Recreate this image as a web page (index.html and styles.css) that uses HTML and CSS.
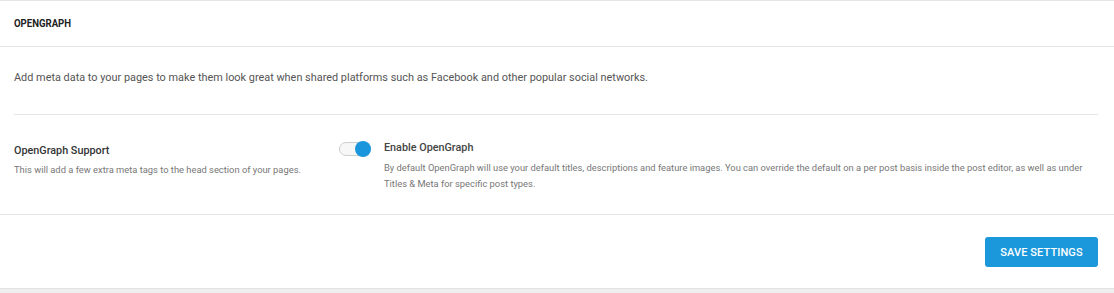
FILE: index.html
```html
<!DOCTYPE html>
<html lang="en">
<head>
<meta charset="utf-8">
<title>OpenGraph</title>
<link rel="stylesheet" href="styles.css">
</head>
<body>
<div class="card">
  <div class="card-header">
    <h2 class="card-title">OPENGRAPH</h2>
  </div>
  <div class="card-body">
    <p class="intro">Add meta data to your pages to make them look great when shared platforms such as Facebook and other popular social networks.</p>
    <div class="setting-row">
      <div class="setting-label">
        <div class="label-title">OpenGraph Support</div>
        <div class="label-desc">This will add a few extra meta tags to the head section of your pages.</div>
      </div>
      <div class="setting-control">
        <span class="toggle is-on"><span class="toggle-knob"></span></span>
        <div class="control-text">
          <div class="control-title">Enable OpenGraph</div>
          <div class="control-desc">By default OpenGraph will use your default titles, descriptions and feature images. You can override the default on a per post basis inside the post editor, as well as under Titles &amp; Meta for specific post types.</div>
        </div>
      </div>
    </div>
  </div>
  <div class="card-footer">
    <button class="btn-primary" type="button">SAVE SETTINGS</button>
  </div>
</div>
</body>
</html>
```

FILE: styles.css
```css
html, body {
  margin: 0;
  padding: 0;
}
body {
  background: #efefef;
  font-family: Roboto, "Liberation Sans", Arial, sans-serif;
  color: #444;
}
.card {
  background: #fff;
  border-top: 1px solid #e6e6e6;
  border-bottom: 1px solid #e2e2e2;
}
.card-header {
  height: 45px;
  display: flex;
  align-items: center;
  padding: 0 14px;
  border-bottom: 1px solid #e6e6e6;
}
.card-title {
  margin: 0;
  font-size: 10px;
  font-weight: 700;
  color: #222;
  letter-spacing: 0;
  transform: scaleX(0.96);
  transform-origin: left center;
}
.card-body {
  padding: 0 16px 0 14px;
}
.intro {
  margin: 0;
  padding: 22px 0 27px;
  font-size: 10.9px;
  line-height: 18px;
  color: #555;
  border-bottom: 1px solid #e6e6e6;
}
.setting-row {
  display: flex;
  padding: 25px 0 0;
  height: 74px;
}
.setting-label {
  width: 325px;
  flex: none;
  padding-top: 3px;
}
.label-title {
  font-size: 10.8px;
  font-weight: 500;
  line-height: 16px;
  color: #333;
}
.label-desc {
  margin-top: 3px;
  font-size: 9.35px;
  line-height: 16px;
  color: #777;
}
.setting-control {
  display: flex;
  flex: 1;
}
.toggle {
  position: relative;
  flex: none;
  width: 30px;
  height: 12px;
  margin-top: 2px;
  border: 1px solid #cfcfcf;
  border-radius: 8px;
  background: #f7f7f7;
}
.toggle-knob {
  position: absolute;
  right: -1px;
  top: -2px;
  width: 16px;
  height: 16px;
  border-radius: 50%;
  background: #1a96dc;
}
.control-text {
  margin-left: 13px;
}
.control-title {
  font-size: 10.8px;
  font-weight: 500;
  line-height: 16px;
  color: #444;
}
.control-desc {
  margin-top: 4px;
  font-size: 9.35px;
  line-height: 16px;
  color: #777;
}
.card-footer {
  border-top: 1px solid #e6e6e6;
  height: 74px;
  display: flex;
  justify-content: flex-end;
  align-items: flex-start;
  padding: 22px 16px 0;
  box-sizing: border-box;
}
.btn-primary {
  width: 113px;
  height: 30px;
  border: none;
  border-radius: 3px;
  background: #1b98db;
  color: #fff;
  font-family: Roboto, "Liberation Sans", Arial, sans-serif;
  font-size: 11px;
  font-weight: 500;
  letter-spacing: 0.1px;
  padding: 0;
}
```
